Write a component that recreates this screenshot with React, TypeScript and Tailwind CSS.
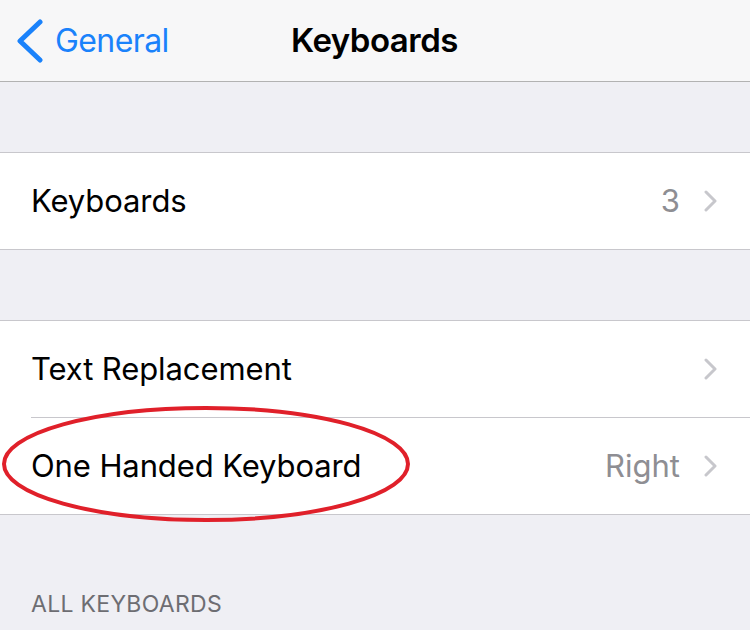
import React from "react";

const Chevron = () => (
  <svg width="14" height="22" viewBox="0 0 14 22" className="shrink-0">
    <path d="M2 2 L11 11 L2 20" fill="none" stroke="#c7c7cc" strokeWidth="3" strokeLinecap="round" strokeLinejoin="round" />
  </svg>
);

const Row = ({ label, value }: { label: string; value?: string }) => (
  <div className="h-[96px] flex items-center pl-[31px] pr-[32px]">
    <div className="flex-1 text-[31px] text-black tracking-[-0.1px]">{label}</div>
    {value && <div className="text-[31px] text-[#8e8e93] mr-[24px]">{value}</div>}
    <Chevron />
  </div>
);

export default function App() {
  return (
    <div className="w-[750px] h-[630px] overflow-hidden bg-[#efeff4]" style={{ fontFamily: "Inter, 'Noto Sans', sans-serif" }}>
      <div className="h-[82px] bg-[#f7f7f8] border-b border-[#b2b2b2] flex items-center relative">
        <div className="flex items-center pl-[14px]">
          <svg width="30" height="44" viewBox="0 0 30 44">
            <path d="M26 3 L6 22 L26 41" fill="none" stroke="#1a82fb" strokeWidth="5" strokeLinecap="round" strokeLinejoin="round" />
          </svg>
          <span className="ml-[11px] text-[32px] text-[#1a82fb] tracking-[-0.6px]">General</span>
        </div>
        <div className="absolute left-[291px] top-0 h-full flex items-center text-[33px] font-semibold text-black tracking-[-0.5px]">Keyboards</div>
      </div>
      <div className="h-[70px]" />
      <div className="bg-white border-y border-[#c8c7cc]">
        <Row label="Keyboards" value="3" />
      </div>
      <div className="h-[70px]" />
      <div className="bg-white border-y border-[#c8c7cc] relative">
        <Row label="Text Replacement" />
        <div className="ml-[31px] h-px bg-[#c8c7cc]" />
        <Row label="One Handed Keyboard" value="Right" />
        <svg className="absolute left-0 top-[80px] pointer-events-none" width="420" height="130" viewBox="0 0 420 130">
          <ellipse cx="206" cy="63" rx="202" ry="56" fill="none" stroke="#e0202a" strokeWidth="4" />
        </svg>
      </div>
      <div className="pl-[31px] pt-[72px] text-[23px] text-[#6d6d72] tracking-[0.3px]">ALL KEYBOARDS</div>
    </div>
  );
}
